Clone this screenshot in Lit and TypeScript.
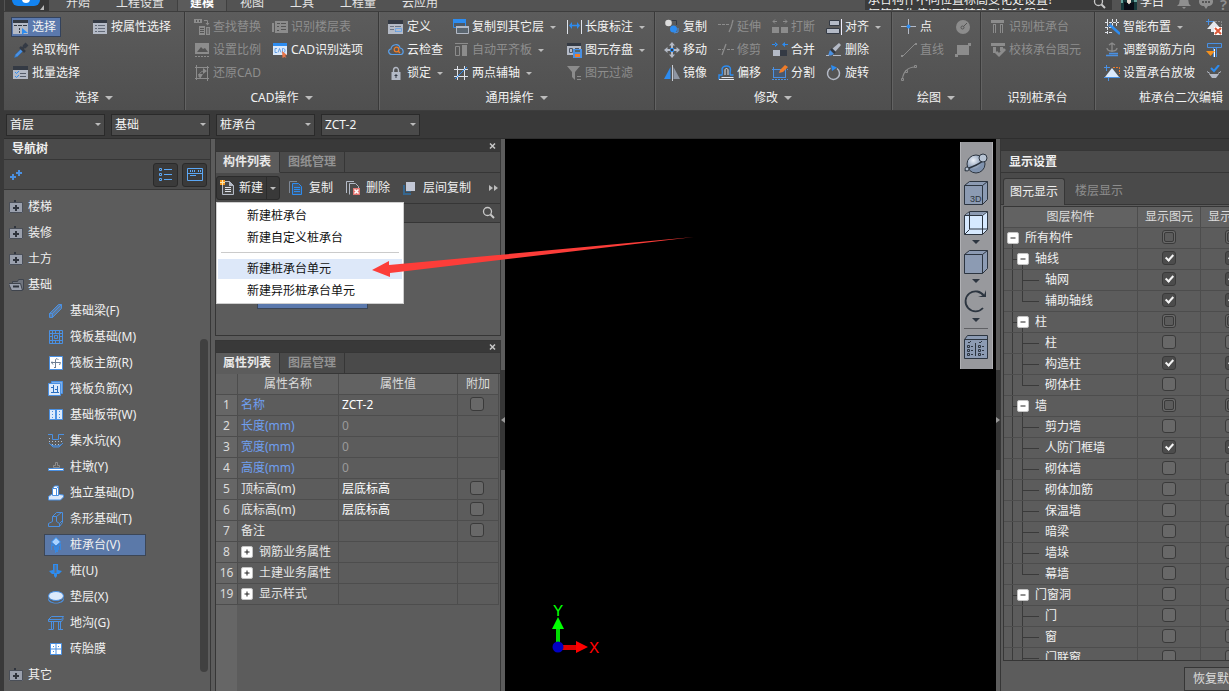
import { LitElement, html, css, svg, nothing } from "lit";
import type { TemplateResult } from "lit";
import { customElement, property } from "lit/decorators.js";
import { classMap } from "lit/directives/class-map.js";

type Art = TemplateResult<2>;

const L = "#b4bac6";
const D = "#343a44";
const B = "#4a90e2";
const C = "#2d8cf0";
const G = "#8c8c8c";
const P = "#dbe9fb";

/* Glyphs on a 16 x 16 grid. */
const glyphs: Record<string, Art> = {
  selectBox: svg`<path fill=${D} d="M0 1h15v3H0z"/><path fill=${L} d="M0 4h15v11H0z"/><path d="M5 6.500h4M10 6.500h4M6.500 9v2M6.500 12v2M1 6.500h3" stroke=${D} fill="none"/><path fill=${C} d="M9 9v7l2-2 4 0z"/>`,
  table: svg`<path fill=${D} d="M1 1h14v3H1z"/><path fill=${L} d="M1 4h14v11H1z"/><path d="M3 6.500h2m1 0h7M3 9.500h2m1 0h7M3 12.500h2m1 0h7" stroke="#626a78" fill="none"/>`,
  picker: svg`<path d="M1.500 15.500l1-3 6-6 2 2-6 6z" fill=${B} stroke="#2a6fb8" stroke-width=".6"/><path d="M7 5l5 5M9 7l4-4" stroke=${D} stroke-width="2.600"/><path d="M11 5l3-3" stroke=${D} stroke-width="4"/>`,
  batch: svg`<path fill=${D} d="M0 1h15v4H0z"/><path fill=${L} d="M0 5h15v9H0z"/><path d="M2 7l1.500 1.500L6 6M2 11l1.500 1.500L6 10" stroke=${C} fill="none"/><path d="M7 8.500h6M7 11.500h6" stroke="#555d6b"/>`,
  find: svg`<path fill=${G} d="M0 0h8v4H0z"/><path fill="none" stroke="#555" d="M2.500 1v2M5.500 1v2"/><path fill="none" stroke=${G} d="M10 1.500h3.500V5"/><path fill=${G} d="M11.500 4h4l-2 2.500zM5 7h6v9H5zM12 8h4v8h-4z"/><path stroke="#555" d="M6 9.500h4M6 11.500h4M6 13.500h4M14 9v6"/>`,
  scale: svg`<path fill=${G} d="M1 1h14v11H1z"/><path fill="#555" d="M3 10l4-5 2 2 2-1 3 4z"/><path stroke=${G} d="M1 14.500h14" stroke-dasharray="2 1"/>`,
  restore: svg`<path fill="none" stroke=${G} d="M1 2.500h14M2.500 0v15M1 13.500h14M13.500 1v15M5 12c0-4 2-6 6-6"/><path fill=${G} d="M4 9h5l-3 5zM9 3v6l4-3z"/>`,
  floorTable: svg`<path fill=${G} d="M3 2h13v12H3zM0 4h2v9H0z"/><path stroke="#555" d="M5 4.500h3M5 7.500h2m2-3h5M9 7.500h5M9 10.500h5M5 11.500h2"/>`,
  cad: svg`<path fill=${C} d="M1 1h14v3H1z"/><path fill=${P} d="M1 4h14v9H1z"/><path fill="none" stroke=${B} stroke-width=".8" d="M5 6.500H3v4h2M6 10.500l1.500-4L9 10.500M10.500 6.500v4h1l1.500-1v-2l-1.500-1z"/><path fill="#e8754a" d="M10 9l5 4-2 .5L14.500 16l-2-1-2 1z"/>`,
  define: svg`<path fill=${D} d="M0 1h15v4H0z"/><path fill=${L} d="M0 5h15v10H0z"/><path stroke="#697384" d="M2 7.500h4M7 7.500h6M2 10.500h4M7 12.500h6"/><path fill="none" stroke="#6ea5e4" d="M7.500 9.500h6v3h-6z"/>`,
  cloud: svg`<path fill="none" stroke="#5ba0ea" stroke-width="1.200" d="M4 12.500C0 12.500-.5 7.500 3 7 3.500 2 11 1 12 6c4 .5 4 6 1 6.500z"/><circle cx="8.500" cy="7.500" r="2.300" fill="none" stroke="#f07c28" stroke-width="1.200"/><path stroke="#f07c28" stroke-width="1.500" d="M10 9l2 2"/>`,
  lock: svg`<path fill="none" stroke=${L} stroke-width="1.400" d="M5.500 8V5.500a2.500 3 0 015 0V8"/><path fill=${L} d="M3.500 7h9v8h-9z"/><path stroke=${D} d="M8 9v4M6.500 10.500h3"/>`,
  copyLayer: svg`<path fill="#4d5a68" stroke=${C} d="M.5 1.500h12v7H.5z"/><path fill=${C} d="M0 0h13v4H0z"/><path fill="#5b6670" stroke=${L} d="M3.500 7.500h12v7h-12z"/><path fill=${L} d="M3 7h13v2H3z"/>`,
  autoAlign: svg`<path stroke=${G} d="M2 1.500h13"/><path fill="none" stroke=${G} d="M2.500 4.500h4v9h-4z"/><path fill=${G} d="M9 3h5v11H9z"/>`,
  axes: svg`<path stroke="#dfe3ea" fill="none" d="M1 4.500h14M1 11.500h14M4.500 1v14M11.500 1v14"/><path stroke=${C} d="M2 14L14 2"/>`,
  length: svg`<path stroke="#dfe3ea" fill="none" d="M1.500 1v14M15.500 1v14"/><path stroke=${C} stroke-width="1.500" d="M4 6.500h8"/><path fill=${C} d="M6 3v7L3 6.500zM11 3v7l3-3.500z"/>`,
  save: svg`<path fill=${D} d="M1 1h14v3H1z"/><path fill=${L} d="M1 4h14v9H1z"/><path fill="none" stroke="#4e5868" d="M3.500 6.500h3v4h-3zM9 6.500h4"/><path fill=${B} d="M7 7h9v9H7z"/><path fill="#566" d="M9 8h5v2H9z"/><path fill="#f07c28" d="M9 12h5v3H9z"/>`,
  filter: svg`<path fill=${G} d="M1 1h13L9 7v8l-3-3V7z"/><path stroke=${G} d="M11 11.500h4M11 14.500h4"/>`,
  copy: svg`<circle cx="4.500" cy="4" r="3.300" fill="#dcdcdc"/><path d="M8 1.500h4.500V6" stroke=${D} fill="none"/><circle cx="9.500" cy="10" r="3.500" fill=${C}/><path d="M14 9v4l-4 1" stroke=${B} fill="none"/>`,
  move: svg`<path fill=${L} d="M8 0l3 3.500H9V6H7V3.500H5zM8 16l3-3.500H9V10H7v2.500H5zM0 8l3.500-3v2H6v2H3.500v2zM16 8l-3.500-3v2H10v2h2.500v2z"/><path fill=${D} stroke=${C} d="M6.500 6.500h3v3h-3z"/>`,
  mirror: svg`<path fill=${C} d="M6.500 2v12H0z"/><path fill="#8f96a3" d="M9.500 2v12H16z"/><path stroke="#c9cdd5" d="M8.500 0v16"/>`,
  extend: svg`<path stroke=${G} stroke-dasharray="3 1" d="M0 5.500h11"/><path stroke=${G} stroke-width="1.300" d="M11 13c2-4 3-7 4-12"/>`,
  trim: svg`<path stroke=${G} stroke-dasharray="3 1" d="M0 7.500h5M9 7.500h7"/><path stroke=${G} stroke-width="1.300" d="M4 13L8 2"/>`,
  breakUp: svg`<path stroke=${G} d="M1 2.500h4M11 2.500h4M3 .5L1 2.500 3 4.500M13 .5L15 2.500 13 4.500" fill="none"/><path fill=${G} d="M0 8h7v6H0zM9 8h7v6H9z"/>`,
  merge: svg`<path fill=${C} d="M3 0v5l3-2.500zM13 0v5l-3-2.500zM0 2h4v1H0zM12 2h4v1h-4z"/><path fill=${L} d="M1 8h7v6H1z"/><path fill=${D} d="M8 8h7v6H8z"/>`,
  align: svg`<path fill=${L} stroke=${D} d="M3.500 1.500h10v5h-10zM.5 9.500h13v5H.5z"/><path stroke="#eef" d="M15.500 0v16"/>`,
  erase: svg`<path fill=${L} d="M13 1l2 2-6 7-3-3z"/><path fill=${D} d="M6 6l4 4-2 2-4-4z"/><path fill=${B} d="M4 8l4 4-3 1.500H2z"/><path stroke=${L} d="M0 13.500h3M7 13.500h8"/>`,
  offset: svg`<path fill="none" stroke=${C} stroke-width="1.400" d="M1 14.500V10h3C5 8 4 5 4 4c1-4 8-4 8.500 0 0 2-1 4 0 6h3"/><path fill="none" stroke="#dfe3ea" d="M3.500 12.500h12M1 14.500h15M7 10V5c0-2 3-2 3 0v5"/>`,
  split: svg`<path fill="#48586e" stroke=${B} d="M1.500 4.500h12v8h-12z"/><path stroke=${B} d="M0 4.500h16M0 14.500h16M1.500 2v13M13.500 2v13" stroke-dasharray="2 1"/><path fill="#f07c28" d="M13 0l3 2-5 5-4 1 1-3z"/>`,
  rotate: svg`<path fill="none" stroke=${L} stroke-width="1.500" d="M11 3.500a6 6 0 11-6.500-.3"/><path fill=${C} d="M5 0l6 2.500L6 6z"/>`,
  point: svg`<path stroke=${L} d="M7.500 0v15M0 7.500h15"/><circle cx="7.500" cy="7.500" r="2" fill=${C}/>`,
  circle: svg`<circle cx="8" cy="8" r="7" fill=${G}/><circle cx="7.500" cy="8.500" r="1.500" fill="none" stroke="#555"/><path stroke="#555" d="M8.500 7.500L12 4"/>`,
  line: svg`<path stroke=${G} d="M2 14L14 2"/><path fill=${G} d="M0 13h2v2H0zM14 1h2v2h-2z"/>`,
  rect: svg`<path fill=${G} d="M2 3h12v10H2z"/><path fill=${G} d="M13 1h3v3h-3zM0 12h3v3H0z"/>`,
  arc: svg`<path fill="none" stroke=${G} stroke-width="1.200" d="M1.500 14C2 7 7 2 14 2"/><path fill="#5a5a5a" stroke=${G} d="M.5 13.500h2v2h-2zM4.500 5.500h2v2h-2zM13.500.5h2v2h-2z"/>`,
  cap: svg`<path fill=${G} d="M1 1h13v3H1zM3 5h3v9H3zM10 5h3v9h-3z"/><path stroke="#555" d="M4.500 6v8M11.500 6v8"/>`,
  capCheck: svg`<path fill=${G} d="M1 1h14v3H1zM3 5h3v6H3zM10 5h3v4h-3z"/><path fill="none" stroke=${G} stroke-width="3" d="M6 10l3 3 6-6"/>`,
  smart: svg`<path fill="none" stroke="#dfe3ea" d="M1 3.500h14M1 8.500h8M1 13.500h8M3.500 0v15M8.500 0v7M12.500 0v7" stroke-dasharray="3 1"/><path stroke=${C} stroke-width="2.500" d="M6 6l10 9"/><path stroke=${B} d="M4 8l3-4"/>`,
  steer: svg`<path fill="none" stroke=${G} stroke-width="1.300" d="M8 1v9M5 3l3-2 3 2M3 6c0 4 10 4 10 0"/><path fill="none" stroke=${B} stroke-width="1.300" d="M2 13.500h12M5 11.500h9"/>`,
  slope: svg`<path stroke=${B} fill="none" d="M2.500 0v6M0 2.500h6M4.500 12v4M0 12.500h16"/><path fill=${P} d="M8 3l7 9H1z"/><path stroke="#f07c28" stroke-dasharray="2 1" fill="none" d="M9 2.500h6.500V9"/>`,
  slopeDel: svg`<path stroke=${B} fill="none" d="M2.500 0v6M0 2.500h8"/><path stroke=${G} stroke-dasharray="2 1" d="M9 2.500h6.500V8" fill="none"/><path fill="#e4e8ee" d="M8 2l7 8H1zM5 9h7v4H5z"/><path fill="#fff" d="M8 8h8v8H8z"/><path stroke="#dd5a3a" stroke-width="2" d="M9 9l6 6M15 9l-6 6"/>`,
  swap: svg`<path fill="#4d5a68" stroke=${B} d="M1.500 1.500h14v4h-14z"/><path stroke=${B} fill="none" d="M7.500 6v9M10.500 6v9"/><path stroke="#fff" d="M8.500 7v8"/><path fill="#f6921e" d="M0 9h9l-4.500 5z"/>`,
  checkBase: svg`<path fill="none" stroke=${C} stroke-width="2" d="M5 3l3 3 5-6"/><path fill=${L} d="M3 9h10l-3 4H6z"/><path stroke=${L} d="M1 6.500l3 2M15 6.500l-3 2"/>`,
  folder: svg`<path fill="#2f343d" d="M1 3h4V1h2v2h5v2H1z"/><path fill="#9aa0ad" d="M0 4h14v10H0z"/><path stroke="#2f343d" stroke-width="2" d="M7 6v6M4 9h6"/><path fill="none" stroke="#4a4f58" d="M.5 3.500h13v10H.5z"/>`,
  folderOpen: svg`<path fill="#70757f" stroke="#3f444d" d="M3.500 4.500h5l1-2h5v10h-11z"/><path fill="#9aa0ad" stroke="#3f444d" d="M-.5 6.500h12l2 7h-11z"/><path stroke="#2f343d" stroke-width="2" d="M4 9.500h6"/>`,
  beam: svg`<path fill="#5f7896" stroke=${B} d="M1.500 10.500l9-9h3v4l-9 9h-3zM1.500 10.500h3v4M4.500 10.500l9-9"/>`,
  raft: svg`<path fill="none" stroke=${B} d="M1.500 1.500h13v13h-13zM4.500 4.500h7v7h-7zM1 4.500h14M1 11.500h14M4.500 1v14M11.500 1v14M6.500 6.500h3v3h-3zM7.500 1v3M7.500 12v3M1 7.500h3M12 7.500h3"/>`,
  raftMain: svg`<path fill="#fff" stroke=${B} d="M1.500 1.500h13v13h-13z"/><path fill="none" stroke="#6e7f93" d="M7.500 13V4.500L9 3.500 10.500 5M3 7.500h9.500M4 6.500l-.5 1 1.500 2M12.500 7.500L11.500 10M6 12.500h2"/>`,
  raftNeg: svg`<path fill="#7fb0ea" stroke=${B} d="M3.500.5h11v12h-11z"/><path fill=${P} stroke=${B} d="M.5 2.500h12v12H.5z"/><path fill="none" stroke="#2a6fc0" d="M3 6.500h3M5.500 4v7M3 11.500h8M9.500 5v7M7 8.500h3"/>`,
  strip: svg`<path fill=${P} stroke=${B} d="M1.500 2.500h13v10h-13z"/><path stroke=${B} stroke-width="2" d="M8 2v11"/><path stroke=${B} stroke-dasharray="1 2" d="M4.500 4v8M11.500 4v8"/>`,
  pit: svg`<path fill="none" stroke=${B} d="M0 1.500h4.500v5h6v-5H16M1 10c3 4 11 4 14 0l-4 4H5z"/><path stroke="#b7c3d2" stroke-dasharray="1 2" d="M1 5.500h3M1 8.500h13M12 5.500h3M4 11.500h8"/>`,
  pier: svg`<path fill="none" stroke=${G} d="M5.500 8.500V6.500h2v-3h2v3h2v2z"/><path fill="#fff" stroke=${B} d="M.5 9.500h15v2H.5z"/>`,
  iso: svg`<path fill=${P} stroke=${B} d="M.5 11.500l3-2h8l4 .5v2l-3 3H.5z"/><path fill="#fff" stroke=${B} d="M4.500 10.500v-7l2-2.500h4v9.500z"/><path fill="none" stroke=${B} d="M8.500 10V3.500h-4M8.500 3.500l2-2"/>`,
  stripBase: svg`<path fill="none" stroke=${B} d="M.5 15.500v-3l4-2v-5l4-4h6v10l-3 4zM4.500 5.500h4v5l3 2v3M8.500 5.500l5-4M11.500 12.500l3-3"/>`,
  pileCap: svg`<path fill=${C} d="M3 6l5 4 5-4v7h-1V9h-1v4h-1v2H8v1H7v-3H6V9H4v4H3z" opacity=".8"/><path fill="#a9d2ff" stroke=${C} d="M8 .5L12.500 5 8 9 3.500 5z"/>`,
  pile: svg`<path fill=${C} d="M5 1h5v6l4 1-3 3H9v2l-1.500 2L6 13v-2H4L1 8l4-1z"/><path stroke="#5c6f88" stroke-width="2" d="M7.500 2v8"/>`,
  cushion: svg`<path fill=${B} d="M0 7c0 9 16 9 16 0v3c0 6-16 6-16 0z"/><ellipse cx="8" cy="7" rx="7.500" ry="4.500" fill=${P} stroke=${B}/>`,
  trench: svg`<path fill="none" stroke=${B} d="M.5 4.500l3-3h12l-2 3zM.5 4.500v2h13l2-3M3.500 7v7M5.500 7v7M10.500 7v7M12.500 7v7M.5 14.500h5M10 14.500h5"/>`,
  brick: svg`<path fill="#fff" stroke=${B} d="M2.500 2.500h11v11h-11z"/><path stroke=${B} d="M8 2v12M2 8h12"/><path stroke=${B} stroke-dasharray="1 1" d="M5 5.500h2M10 5.500h2M5 10.500h2"/>`,
  plus2: svg`<path stroke=${B} stroke-width="2" d="M1 10h6M4 7v6M7 6h6M10 3v6"/>`,
  list: svg`<path fill="none" stroke="#5ba7f5" d="M1.500 1.500h2v2h-2zM1.500 6.500h2v2h-2zM1.500 11.500h2v2h-2zM6 2.500h8M6 7.500h8M6 12.500h8"/>`,
  card: svg`<path fill="none" stroke="#5ba7f5" d="M.5 1.500h15v12H.5zM1 6.500h14M3 8.500h6"/><path stroke="#5ba7f5" stroke-width="2" stroke-dasharray="1 1" d="M3 4h5M11 4h3"/>`,
  create: svg`<path fill="#4a4a4a" stroke=${L} d="M2.500 1.500h7l4 4v9h-11z"/><path fill=${L} d="M9 1v5h5z"/><path stroke="#dfe3ea" d="M5 7.500h6M5 9.500h6M5 11.500h6"/><path fill="#f59a23" d="M0 0h5v5H0z"/><path fill="#ffe9b0" d="M2 0h1v5H2zM0 2h5v1H0z"/>`,
  dup: svg`<path fill="none" stroke="#7e8896" d="M.5 13V1.500H8"/><path fill="#45576c" stroke=${C} d="M3.500 3.500h6l3 3v8h-9z"/><path stroke=${C} d="M5 7.500h6M5 9.500h6M5 11.500h6"/>`,
  remove: svg`<path fill="none" stroke=${L} d="M.5 13V1.500H8M3.500 14.500v-11h6l3 3V8"/><path fill="#e07470" d="M7 8h7v7H7z"/><path stroke="#fff" stroke-width="1.500" d="M8.500 9.500l4 4M12.500 9.500l-4 4"/>`,
  between: svg`<path fill="#35668f" d="M0 5h8v10H0z"/><path fill="#4a4a4a" d="M2 3h1v9h8v1H2z"/><path fill="#c3c8d6" d="M3 2h9v9H3z"/>`,
  search: svg`<circle cx="6.500" cy="6.500" r="4" fill="none" stroke="#c8c8c8" stroke-width="1.300"/><path stroke="#c8c8c8" stroke-width="2" d="M9.500 9.500l3.500 3.500"/>`,
  more: svg`<path fill="#bdbdbd" d="M5 5l4 3-4 3zM10 5l4 3-4 3z"/>`,
  close: svg`<path stroke="#c8c8c8" stroke-width="1.500" d="M6 5.500l5 5M11 5.500l-5 5"/>`,
  bell: svg`<path fill="#8f8f8f" d="M8 1c5 0 4 5 5 8l2 2H1l2-2c1-3 0-8 5-8zM6 12h4l-2 2z"/>`,
  chat: svg`<path fill="#8f8f8f" d="M8 1c9 0 9 10 2 10l-2 3-2-3C-1 11-1 1 8 1z"/><path stroke="#555" stroke-width="2" stroke-dasharray="2 1" d="M4 7h8"/>`,
  avatar: svg`<path fill="#16383a" d="M0 0h16v16H0z"/><path fill="#66a39c" d="M0 0h2v9H0zM13 3h3v5h-3z"/><path fill="#e9ddd2" d="M6 3h4v7H6z"/><path fill="#0b0d16" d="M3 8l4 1 1 3 1-3 4-1v8H3z"/>`,
};

/* Larger view controls on a 24 x 24 grid. */
const K = "#2c3540";
const views: Record<string, Art> = {
  orbit: svg`<defs><radialGradient id="s" cx=".35" cy=".3"><stop offset="0" stop-color="#eef3fa"/><stop offset="1" stop-color="#7f92ad"/></radialGradient></defs><circle cx="12" cy="13" r="9" fill="url(#s)" stroke=${K}/><path d="M1 20c3-4 12-4 20-12" fill="none" stroke=${K} stroke-width="1.600"/><circle cx="19" cy="7" r="4" fill="#b8c4d4" stroke=${K}/><circle cx="3" cy="18" r="2" fill="#b8c4d4" stroke=${K}/>`,
  cube3d: svg`<path fill="#8c9bb3" stroke=${K} d="M.5 4.500l5-4h18v18l-5 5H.5zM.5 4.500h18v19M18.500 4.500l5-4"/><text x="6" y="21" font-size="9" font-family="Liberation Sans" fill=${K}>3D</text>`,
  wire: svg`<path fill="#d6e9ff" stroke=${K} d="M.5 4.500l5-4h18v18l-5 5H.5z"/><path fill="#8c9bb3" d="M2 4l4-3h16l-4 3z"/><path fill="none" stroke=${K} d="M.5 4.500h18v19M18.500 4.500l5-4M5.500 1v17h18M.5 23.500l5-5"/>`,
  solid: svg`<path fill="#8c9bb3" stroke=${K} d="M.5 4.500l5-4h18v18l-5 5H.5zM.5 4.500h18v19M18.500 4.500l5-4"/>`,
  turn: svg`<path fill="none" stroke=${K} stroke-width="1.800" d="M20 7a10 10 0 10-1 12"/><path fill=${K} d="M14 8h8V1l-2 5z"/>`,
  panel: svg`<path fill="#8c9bb3" stroke=${K} d="M.5 4.500l3-4h20v23H.5zM.5 4.500h23"/><path fill="none" stroke=${K} d="M3.500 10.500h2v2h-2zM3.500 14.500h2v2h-2zM3.500 18.500h2v2h-2zM14.500 10.500h2v2h-2zM14.500 14.500h2v2h-2zM14.500 18.500h2v2h-2zM7 11.500h2M7 15.500h2M7 19.500h2M18 11.500h2M18 15.500h2M18 19.500h2M11.500 8v13M4 7l1 1 2-2M15 7l1 1 2-2"/>`,
};

const shared = css`
  :host, .scope { font: 12px/18px "Noto Sans", "Noto Sans CJK SC", sans-serif; }
  *, *::before, *::after { box-sizing: border-box; }
  button, input, select { font: inherit; color: inherit; margin: 0; padding: 0; border: 0; background: none; border-radius: 0; outline: 0; }
  button { white-space: nowrap; text-align: left; }
  svg { display: block; flex: none; }
  .caret { flex: none; width: 0; height: 0; border: 3px solid transparent; border-top: 3px solid #bcbcbc; border-bottom: 0; }
`;

const icon = (name: string) => html`<svg width="16" height="16" viewBox="0 0 16 16" aria-hidden="true">${glyphs[name]}</svg>`;
const caret = html`<span class="caret"></span>`;

type Cmd = { i: string; t?: string; off?: boolean; drop?: boolean; on?: boolean };
type Group = { label: string; drop: boolean; size: string; cols: Cmd[][] };

const groups: Group[] = [
  { label: "选择", drop: true, size: "w181", cols: [
    [{ i: "selectBox", t: "选择", on: true }, { i: "picker", t: "拾取构件" }, { i: "batch", t: "批量选择" }],
    [{ i: "table", t: "按属性选择" }],
  ] },
  { label: "CAD操作", drop: true, size: "w194", cols: [
    [{ i: "find", t: "查找替换", off: true }, { i: "scale", t: "设置比例", off: true }, { i: "restore", t: "还原CAD", off: true }],
    [{ i: "floorTable", t: "识别楼层表", off: true }, { i: "cad", t: "CAD识别选项" }],
  ] },
  { label: "通用操作", drop: true, size: "w276", cols: [
    [{ i: "define", t: "定义" }, { i: "cloud", t: "云检查" }, { i: "lock", t: "锁定", drop: true }],
    [{ i: "copyLayer", t: "复制到其它层", drop: true }, { i: "autoAlign", t: "自动平齐板", off: true, drop: true }, { i: "axes", t: "两点辅轴", drop: true }],
    [{ i: "length", t: "长度标注", drop: true }, { i: "save", t: "图元存盘", drop: true }, { i: "filter", t: "图元过滤", off: true }],
  ] },
  { label: "修改", drop: true, size: "w237", cols: [
    [{ i: "copy", t: "复制" }, { i: "move", t: "移动" }, { i: "mirror", t: "镜像" }],
    [{ i: "extend", t: "延伸", off: true }, { i: "trim", t: "修剪", off: true }, { i: "offset", t: "偏移" }],
    [{ i: "breakUp", t: "打断", off: true }, { i: "merge", t: "合并" }, { i: "split", t: "分割" }],
    [{ i: "align", t: "对齐", drop: true }, { i: "erase", t: "删除" }, { i: "rotate", t: "旋转" }],
  ] },
  { label: "绘图", drop: true, size: "w89", cols: [
    [{ i: "point", t: "点" }, { i: "line", t: "直线", off: true }, { i: "arc" }],
    [{ i: "circle", off: true }, { i: "rect", off: true }],
  ] },
  { label: "识别桩承台", drop: false, size: "w114", cols: [
    [{ i: "cap", t: "识别桩承台", off: true }, { i: "capCheck", t: "校核承台图元", off: true }],
  ] },
  { label: "桩承台二次编辑", drop: false, size: "w172", cols: [
    [{ i: "smart", t: "智能布置", drop: true }, { i: "steer", t: "调整钢筋方向" }, { i: "slope", t: "设置承台放坡" }],
    [{ i: "slopeDel" }, { i: "swap" }, { i: "checkBase" }],
  ] },
];

@customElement("ribbon-bar")
export class RibbonBar extends LitElement {
  static styles = [shared, css`
    :host { display: block; color: #f2f2f2; }
    .head { display: flex; height: 19px; margin-top: -8px; background: #535353; }
    .logo { display: flex; justify-content: center; width: 44px; margin: 0 4px 0 1px; background: #383838; }
    .tab { padding: 0 13px; line-height: 21px; color: #e4e4e4; }
    .tab.on { background: #5b5b5b; font-weight: 600; color: #fff; border: solid #404040; border-width: 0 1px; padding: 0 12px; }
    .right { display: flex; align-items: flex-start; gap: 6px; margin-left: auto; padding-right: 2px; }
    .hint { display: flex; width: 247px; height: 18px; overflow: hidden; background: #3b3b3b; padding: 0 4px 0 3px; line-height: 15px; justify-content: space-between; }
    .hint p { margin: 0; width: 200px; white-space: nowrap; }
    .right svg { margin-top: 3px; }
    .user { display: flex; gap: 3px; padding: 0 6px 0 3px; line-height: 20px; }
    .right .user svg { margin-top: 2px; }
    .qm { font-weight: 600; font-size: 15px; color: #8f8f8f; line-height: 24px; }
    .ribbon { display: flex; border: solid #3d3d3d; border-width: 1px 0; background: linear-gradient(#5c5c5c, #4f4f4f); overflow: hidden; }
    .group { flex: none; display: flex; flex-direction: column; padding: 4px 0 3px; border-right: 1px solid #393939; box-shadow: 1px 0 #636363; }
    .group:last-child { border-right: 0; box-shadow: none; }
    .w181 { width: 181px; } .w194 { width: 194px; } .w276 { width: 276px; } .w237 { width: 237px; }
    .w89 { width: 89px; } .w114 { width: 114px; } .w172 { width: 172px; }
    .cols { display: flex; gap: 7px; padding: 0 7px; height: 69px; }
    .w181 .cols { gap: 8px; }
    .w276 .cols { gap: 6px; }
    .col { display: flex; flex-direction: column; align-items: flex-start; gap: 3px; padding-top: 1px; }
    .cmd { display: flex; align-items: center; gap: 3px; height: 20px; padding: 0 2px; }
    .cmd .caret { margin-left: 3px; }
    .cmd:disabled { color: #8e8e8e; }
    .cmd.on { background: #5b79ad; box-shadow: inset 0 0 0 1px #33425c; padding-right: 5px; }
    .label { display: flex; justify-content: center; align-items: center; gap: 6px; height: 22px; padding-top: 4px; }
    .label .caret { border-width: 4px 4px 0; }
  `];

  cmd(c: Cmd) {
    return html`<button class=${classMap({ cmd: true, on: !!c.on })} ?disabled=${!!c.off} aria-label=${c.t ?? c.i}>${icon(c.i)}${c.t ? html`<span>${c.t}</span>` : nothing}${c.drop ? caret : nothing}</button>`;
  }

  render() {
    return html`
      <header class="head">
        <div class="logo"><svg width="44" height="21" viewBox="0 0 44 21"><rect x="7" y="-8" width="28" height="22" rx="6" fill="#1383f0"/><circle cx="21" cy="7" r="4" fill="#fff"/><path d="M39 13v5h-4z" fill="#bbb"/></svg></div>
        ${["开始", "工程设置", "建模", "视图", "工具", "工程量", "云应用"].map((t) => html`<button class=${classMap({ tab: true, on: t === "建模" })}>${t}</button>`)}
        <div class="right">
          <div class="hint"><p>承台构件不同位置标高变化处设置?<br>钢筋变化值调整可精确到何种程度?</p>${icon("search")}</div>
          <div class="user">${icon("avatar")}<span>李白</span></div>
          ${icon("bell")}${icon("chat")}<span class="qm">?</span>
        </div>
      </header>
      <div class="ribbon">
        ${groups.map((g) => html`<section class="group ${g.size}">
          <div class="cols">${g.cols.map((c) => html`<div class="col">${c.map((x) => this.cmd(x))}</div>`)}</div>
          <div class="label">${g.label}${g.drop ? caret : nothing}</div>
        </section>`)}
      </div>`;
  }
}

const leaves: [string, string][] = [
  ["beam", "基础梁(F)"], ["raft", "筏板基础(M)"], ["raftMain", "筏板主筋(R)"], ["raftNeg", "筏板负筋(X)"],
  ["strip", "基础板带(W)"], ["pit", "集水坑(K)"], ["pier", "柱墩(Y)"], ["iso", "独立基础(D)"],
  ["stripBase", "条形基础(T)"], ["pileCap", "桩承台(V)"], ["pile", "桩(U)"], ["cushion", "垫层(X)"],
  ["trench", "地沟(G)"], ["brick", "砖胎膜"],
];

@customElement("nav-tree")
export class NavTree extends LitElement {
  static styles = [shared, css`
    :host { display: flex; flex-direction: column; flex: none; width: 207px; color: #f0f0f0; background: #5c5c5c; border-right: 1px solid #383838; overflow: hidden; }
    .title { margin: 0; padding: 0 8px; font-size: 12px; font-weight: 600; line-height: 20px; background: #4a4a4a; border-bottom: 1px solid #363636; }
    .tools { display: flex; align-items: center; gap: 4px; height: 30px; padding: 0 3px; background: #4a4a4a; border-bottom: 1px solid #363636; }
    .tools .add { margin: 0 auto 0 2px; }
    .tools .box { display: grid; place-items: center; width: 25px; height: 24px; background: #3a3a3a; border: 1px solid #2a2a2a; border-radius: 3px; }
    .wrap { flex: 1; min-height: 0; display: flex; justify-content: space-between; overflow: hidden; }
    ul { list-style: none; margin: 0; padding: 4px 0 0; }
    li ul { padding: 0 0 0 40px; }
    .node { display: flex; align-items: center; gap: 3px; height: 26px; padding-left: 5px; }
    .row { display: flex; align-items: center; height: 26px; }
    .leaf { display: flex; align-items: center; gap: 6px; width: 102px; height: 22px; padding-left: 4px; }
    .leaf.on { background: #5b79a9; box-shadow: inset 0 0 0 1px #3c4656; }
    .bar { width: 8px; height: 333px; margin: 149px 2px 0 0; border-radius: 4px; background: #404040; }
  `];

  node(name: string, open = false) {
    return html`<button class="node">${icon(open ? "folderOpen" : "folder")}${name}</button>`;
  }

  render() {
    return html`
      <h2 class="title">导航树</h2>
      <div class="tools">
        <button class="add" aria-label="添加">${icon("plus2")}</button>
        <button class="box" aria-label="列表">${icon("list")}</button>
        <button class="box" aria-label="卡片">${icon("card")}</button>
      </div>
      <div class="wrap">
        <ul>
          ${["楼梯", "装修", "土方"].map((n) => html`<li>${this.node(n)}</li>`)}
          <li>${this.node("基础", true)}
            <ul>${leaves.map(([i, t]) => html`<li class="row"><button class=${classMap({ leaf: true, on: i === "pileCap" })}>${icon(i)}${t}</button></li>`)}</ul>
          </li>
          <li>${this.node("其它")}</li>
        </ul>
        <div class="bar"></div>
      </div>`;
  }
}

const panelStyles = css`
  .panel { display: flex; flex-direction: column; border: 1px solid #363636; background: #5c5c5c; }
  .cap { display: flex; justify-content: flex-end; align-items: center; height: 11px; background: #393939; overflow: hidden; }
  .tabs { display: flex; height: 22px; background: #4a4a4a; border-top: 1px solid #363636; }
  .tabs button { padding: 0 8px; font-weight: 600; color: #929292; border: solid #363636; border-width: 0 1px 1px 0; }
  .tabs .on { padding: 0 8px 0 7px; background: #5c5c5c; color: #e8e8e8; border-bottom-color: #5c5c5c; }
  .tabs::after { content: ""; flex: 1; border-bottom: 1px solid #363636; }
`;

const gridStyles = css`
  table { table-layout: fixed; border-collapse: separate; border-spacing: 0; }
  th, td { height: 21px; padding: 0; border: solid #4d4d4d; border-width: 0 1px 1px 0; font-weight: 400; line-height: 18px; white-space: nowrap; overflow: hidden; }
  th { color: #dcdcdc; background: #626262; }
  .tick { display: block; appearance: none; width: 14px; height: 14px; margin: 0 auto 2px; border: 1px solid #3a3a3a; border-radius: 3px; background: #686868; position: relative; }
  .tick:checked { background: #4c4c4c; }
  .tick:checked::after { content: ""; position: absolute; left: 4px; top: 1px; width: 5px; height: 8px; border: solid #f4f4f4; border-width: 0 2px 2px 0; transform: rotate(42deg); }
  .tick:indeterminate::after { content: ""; position: absolute; inset: 1px; border: 1px solid #3a3a3a; border-radius: 2px; background: #5c5c5c; }
  .toggle { flex: none; display: grid; place-items: center; width: 12px; height: 12px; background: #fff; border: 1px solid #c4c4c4; border-radius: 2px; }
`;

const sign = (plus: boolean) => html`<svg width="6" height="6" viewBox="0 0 6 6"><path d=${plus ? "M.5 3h5M3 .5v5" : "M.5 3h5"} stroke="#222" fill="none"/></svg>`;

@customElement("component-list")
export class ComponentList extends LitElement {
  static styles = [shared, panelStyles, css`
    :host { display: block; position: relative; color: #f0f0f0; }
    .tools { display: flex; align-items: center; height: 30px; background: #4a4a4a; }
    .split { display: flex; height: 24px; background: #393939; border: 1px solid #2b2b2b; border-radius: 3px; }
    .split button { display: flex; align-items: center; gap: 3px; padding: 0 3px; }
    .split button + button { border-left: 1px solid #2b2b2b; }
    .act { display: flex; align-items: center; gap: 4px; margin-left: 9px; }
    .act + .act { margin-left: 13px; }
    .act.more { margin-left: auto; }
    .find { display: flex; align-items: center; height: 20px; padding-right: 3px; background: #4a4a4a; border: solid #363636; border-width: 1px 0; }
    .find input { flex: 1; min-width: 0; }
    .list { height: 112px; padding: 66px 0 0 41px; }
    .chip { width: 111px; height: 20px; background: #5b79ad; border: 1px solid #3c4656; }
    .menu { position: absolute; left: 1px; top: 63px; z-index: 2; display: flex; flex-direction: column; gap: 2px; width: 188px; padding: 4px 2px 3px; background: #fff; color: #111; box-shadow: inset 0 0 0 1px #cfcfcf; }
    .menu button { height: 20px; padding-left: 29px; }
    .menu .on { background: #dde8f9; }
    .menu hr { width: auto; height: 1px; margin: 2px 3px 4px; border: 0; background: #cbcbcb; }
  `];

  render() {
    return html`
      <section class="panel">
        <div class="cap"><button aria-label="关闭">${icon("close")}</button></div>
        <div class="tabs"><button class="on">构件列表</button><button>图纸管理</button></div>
        <div class="tools">
          <div class="split"><button>${icon("create")}新建</button><button aria-label="新建选项">${caret}</button></div>
          <button class="act">${icon("dup")}复制</button>
          <button class="act">${icon("remove")}删除</button>
          <button class="act">${icon("between")}层间复制</button>
          <button class="act more" aria-label="更多">${icon("more")}</button>
        </div>
        <div class="find"><input type="text" aria-label="搜索构件">${icon("search")}</div>
        <div class="list"><div class="chip"></div></div>
      </section>
      <div class="menu" role="menu">
        <button role="menuitem">新建桩承台</button>
        <button role="menuitem">新建自定义桩承台</button>
        <hr>
        <button role="menuitem" class="on">新建桩承台单元</button>
        <button role="menuitem">新建异形桩承台单元</button>
      </div>`;
  }
}

type Prop = { n: number; name: string; value?: string; kind: "key" | "keyOff" | "plain" | "group"; tick?: boolean };
const props: Prop[] = [
  { n: 1, name: "名称", value: "ZCT-2", kind: "key", tick: true },
  { n: 2, name: "长度(mm)", value: "0", kind: "keyOff" },
  { n: 3, name: "宽度(mm)", value: "0", kind: "keyOff" },
  { n: 4, name: "高度(mm)", value: "0", kind: "keyOff" },
  { n: 5, name: "顶标高(m)", value: "层底标高", kind: "plain", tick: true },
  { n: 6, name: "底标高(m)", value: "层底标高", kind: "plain", tick: true },
  { n: 7, name: "备注", kind: "plain", tick: true },
  { n: 8, name: "钢筋业务属性", kind: "group" },
  { n: 16, name: "土建业务属性", kind: "group" },
  { n: 19, name: "显示样式", kind: "group" },
];

@customElement("property-list")
export class PropertyList extends LitElement {
  static styles = [shared, panelStyles, gridStyles, css`
    :host { flex: 1; min-height: 0; display: flex; flex-direction: column; color: #e6e6e6; }
    .panel { flex: 1; border-bottom: 0; }
    .body { flex: 1; background: linear-gradient(90deg, #666 21px, #5c5c5c 21px); }
    table { width: 283px; background: #5c5c5c; }
    .c1 { width: 22px; } .c2 { width: 101px; } .c3 { width: 119px; } .c4 { width: 41px; }
    tbody th { background: #666; }
    td { padding-left: 3px; }
    td.mark { padding: 0 2px 0 0; }
    .key { color: #6f9ff0; }
    .val { color: #fff; }
    .off { color: #9a9a9a; }
    .grp { display: flex; align-items: center; gap: 6px; }
  `];

  render() {
    return html`<section class="panel">
      <div class="cap"><button aria-label="关闭">${icon("close")}</button></div>
      <div class="tabs"><button class="on">属性列表</button><button>图层管理</button></div>
      <div class="body"><table>
        <colgroup><col class="c1"><col class="c2"><col class="c3"><col class="c4"></colgroup>
        <thead><tr><th></th><th>属性名称</th><th>属性值</th><th>附加</th></tr></thead>
        <tbody>${props.map((p) => html`<tr>
          <th scope="row">${p.n}</th>
          <td class=${classMap({ key: p.kind.startsWith("key") })}>${p.kind === "group" ? html`<div class="grp"><button class="toggle" aria-label="展开">${sign(true)}</button>${p.name}</div>` : p.name}</td>
          <td class=${p.kind === "keyOff" ? "off" : "val"}>${p.value ?? nothing}</td>
          <td class="mark">${p.tick ? html`<input class="tick" type="checkbox" aria-label=${p.name}>` : nothing}</td>
        </tr>`)}</tbody>
      </table></div>
    </section>`;
  }
}

@customElement("model-view")
export class ModelView extends LitElement {
  static styles = [shared, css`
    :host { flex: 1; min-width: 0; display: block; position: relative; background: #000; overflow: hidden; }
    .axis { position: absolute; left: 35px; bottom: 26px; }
    .axis text { font: 17px "Liberation Mono", monospace; text-anchor: middle; }
    .bar { position: absolute; right: 3px; top: 3px; display: flex; flex-direction: column; align-items: center; gap: 6px; width: 33px; padding: 9px 1px 10px 0; background: #98999d; border: 1px solid #b0b1b5; border-width: 0 1px; }
    .bar button { display: flex; flex-direction: column; align-items: center; gap: 5px; }
    .bar .caret { border-width: 4px 4px 0; border-top-color: #2c3540; }
    .bar hr { width: 24px; height: 1px; margin: 0; border: 0; background: #5f6064; }
  `];

  tool(name: string, drop = false) {
    return html`<button aria-label=${name}><svg width="24" height="24" viewBox="0 0 24 24">${views[name]}</svg>${drop ? caret : nothing}</button>`;
  }

  render() {
    return html`
      <svg class="axis" width="70" height="70" viewBox="0 0 70 70">
        <path fill="#0d0" d="M16 32h4v18h-4z"/><path fill="#0f0" d="M18 22l6 12H12z"/>
        <path fill="#d00" d="M20 50h18v5H20z"/><path fill="#f00" d="M48 52l-12 6V46z"/>
        <circle cx="18" cy="52" r="5.500" fill="#0000c4"/>
        <text x="18" y="21" fill="#0f0">Y</text>
        <text x="54" y="58" fill="#f00">X</text>
      </svg>
      <div class="bar">${this.tool("orbit")}${this.tool("cube3d")}${this.tool("wire", true)}${this.tool("solid", true)}${this.tool("turn", true)}<hr>${this.tool("panel")}</div>`;
  }
}

type Row = { t: string; lv: 0 | 1 | 2; s: "on" | "off" | "mix"; last?: boolean };
const leaf = (t: string, s: "on" | "off" = "off", last = false): Row => ({ t, lv: 2, s, last });
const rows: Row[] = [
  { t: "所有构件", lv: 0, s: "mix" },
  { t: "轴线", lv: 1, s: "on" }, leaf("轴网", "on"), leaf("辅助轴线", "on", true),
  { t: "柱", lv: 1, s: "mix" }, leaf("柱"), leaf("构造柱", "on"), leaf("砌体柱", "off", true),
  { t: "墙", lv: 1, s: "mix" }, leaf("剪力墙"), leaf("人防门框墙", "on"), leaf("砌体墙"), leaf("砌体加筋"),
  leaf("保温墙"), leaf("暗梁"), leaf("墙垛"), leaf("幕墙", "off", true),
  { t: "门窗洞", lv: 1, s: "off" }, leaf("门"), leaf("窗"), leaf("门联窗"),
];

@customElement("display-settings")
export class DisplaySettings extends LitElement {
  static styles = [shared, gridStyles, css`
    :host { flex: none; display: flex; flex-direction: column; width: 229px; color: #f0f0f0; background: #5c5c5c; border-left: 1px solid #363636; overflow: hidden; }
    .cap { height: 12px; background: #393939; border-bottom: 1px solid #363636; }
    .title { margin: 0; padding: 0 8px; font-size: 12px; font-weight: 600; line-height: 21px; background: #4a4a4a; border-bottom: 1px solid #363636; }
    .tabs { display: flex; align-items: flex-end; height: 32px; padding-left: 2px; background: #4a4a4a; border-bottom: 1px solid #363636; }
    .tabs button { height: 27px; padding: 0 10px; color: #8e8e8e; }
    .tabs .on { padding: 0 6px; margin-bottom: -1px; color: #f0f0f0; background: #5c5c5c; border: 1px solid #363636; border-bottom: 0; border-radius: 3px 3px 0 0; }
    .body { flex: 1; min-height: 0; margin: 1px 0 0 2px; overflow: hidden; border: solid #363636; border-width: 1px 0 1px 1px; }
    table { width: 260px; }
    .c1 { width: 134px; } .c2 { width: 63px; }
    .name { display: flex; align-items: center; height: 20px; padding-left: 3px; }
    .toggle { margin-right: 6px; position: relative; }
    .toggle::after { content: ""; position: absolute; left: 4px; top: 11px; width: 1px; height: 5px; background: #3a3a3a; }
    .guide { margin-bottom: -1px; }
    .foot { flex: none; display: flex; justify-content: flex-end; height: 30px; padding-top: 6px; }
    .foot button { width: 82px; flex: none; margin-right: -37px; padding-left: 8px; color: #dcdcdc; background: #666; border: 1px solid #363636; }
  `];

  guide(r: Row) {
    if (r.lv === 0) return nothing;
    const d = r.lv === 1 ? "M5.500 0v21M5 10.500h5" : `M5.500 0v21M15.500 0v${r.last ? 11 : 21}M15 10.500h17`;
    return html`<svg class="guide" width=${r.lv === 1 ? 10 : 38} height="21"><path d=${d} stroke="#3a3a3a" fill="none"/></svg>`;
  }

  tick(r: Row, col: string) {
    return html`<input class="tick" type="checkbox" aria-label="${r.t} ${col}" .checked=${r.s === "on"} .indeterminate=${r.s === "mix"}>`;
  }

  render() {
    return html`
      <div class="cap"></div>
      <h2 class="title">显示设置</h2>
      <div class="tabs"><button class="on">图元显示</button><button>楼层显示</button></div>
      <div class="body"><table>
        <colgroup><col class="c1"><col class="c2"><col class="c2"></colgroup>
        <thead><tr><th>图层构件</th><th>显示图元</th><th>显示名称</th></tr></thead>
        <tbody>${rows.map((r) => html`<tr>
          <td><div class="name">${this.guide(r)}${r.lv < 2 ? html`<button class="toggle" aria-label="折叠">${sign(false)}</button>` : nothing}${r.t}</div></td>
          <td>${this.tick(r, "显示图元")}</td><td>${this.tick(r, "显示名称")}</td>
        </tr>`)}</tbody>
      </table></div>
      <div class="foot"><button>恢复默认设置</button></div>`;
  }
}

@customElement("pane-grip")
export class PaneGrip extends LitElement {
  @property() dir = "left";
  static styles = css`
    :host { flex: none; display: flex; flex-direction: column; justify-content: flex-start; width: 4px; padding-top: 231px; background: #5c5c5c; }
    .grip { display: grid; place-items: center; height: 100px; background: #363636; }
  `;
  render() {
    return html`<div class="grip"><svg width="4" height="6" viewBox="0 0 4 6"><path fill="#999" d=${this.dir === "left" ? "M4 0v6L0 3z" : "M0 0v6l4-3z"}/></svg></div>`;
  }
}

@customElement("app-root")
export class AppRoot extends LitElement {
  static styles = [shared, css`
    :host { display: flex; flex-direction: column; height: 100vh; overflow: hidden; padding-left: 4px; background: #393939; color: #f0f0f0; }
    .picks { flex: none; display: flex; align-items: center; gap: 6px; height: 28px; padding-left: 2px; border-bottom: 1px solid #2e2e2e; }
    .pick { display: flex; align-items: center; position: relative; }
    .pick select { appearance: none; width: 99px; height: 22px; padding: 0 14px 0 3px; background: #4a4a4a; border: 1px solid #2a2a2a; color: #f4f4f4; }
    .pick .caret { position: absolute; right: 4px; pointer-events: none; }
    .work { flex: 1; min-height: 0; display: flex; position: relative; }
    .side { flex: none; display: flex; flex-direction: column; gap: 4px; width: 290px; padding-left: 4px; background: #5c5c5c; }
    .pointer { position: absolute; left: 368px; top: 97px; z-index: 3; pointer-events: none; }
  `];

  render() {
    return html`
      <ribbon-bar></ribbon-bar>
      <div class="picks">
        ${[["楼层", "首层"], ["类别", "基础"], ["构件类型", "桩承台"], ["构件", "ZCT-2"]].map(([l, v]) => html`<div class="pick"><select aria-label=${l}><option>${v}</option></select>${caret}</div>`)}
      </div>
      <main class="work">
        <nav-tree></nav-tree>
        <div class="side"><component-list></component-list><property-list></property-list></div>
        <pane-grip dir="left"></pane-grip>
        <model-view></model-view>
        <pane-grip dir="right"></pane-grip>
        <display-settings></display-settings>
        <svg class="pointer" width="326" height="44" viewBox="0 0 326 44"><path fill="#fc3d39" d="M0 34L17 25v4L322 1 18 37v4z"/></svg>
      </main>`;
  }
}
